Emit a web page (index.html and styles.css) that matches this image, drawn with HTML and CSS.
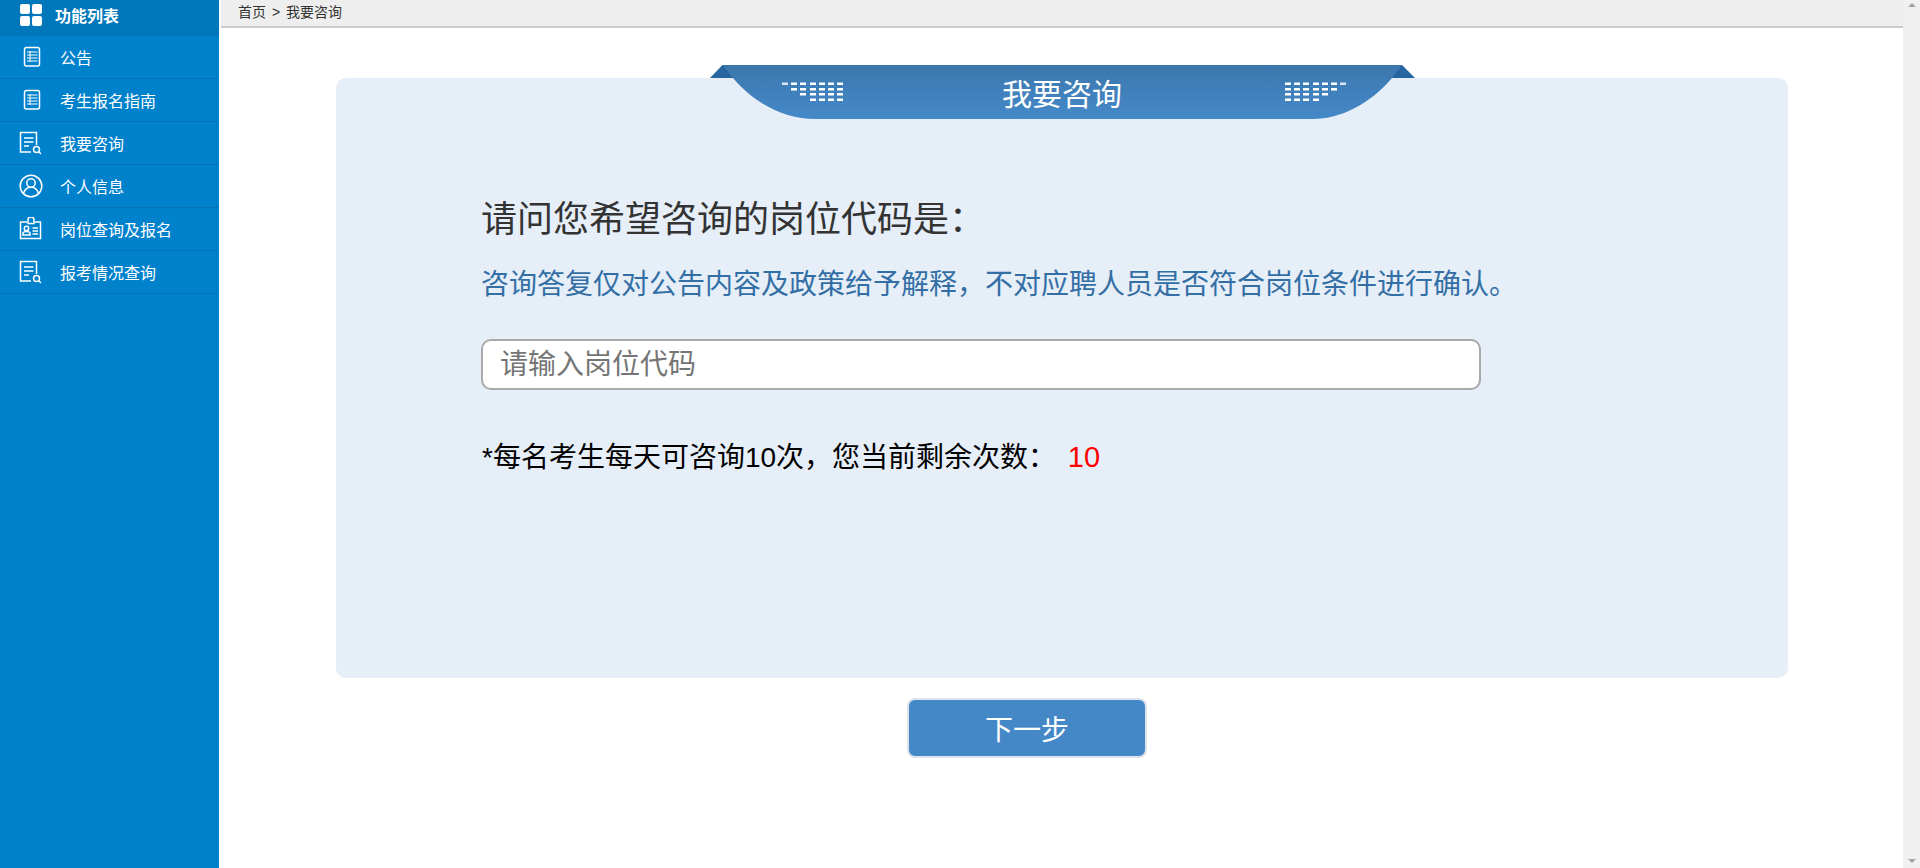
FILE: index.html
```html
<!DOCTYPE html>
<html lang="zh-CN">
<head>
    <meta charset="UTF-8">
    <title>我要咨询</title>
    <link rel="stylesheet" href="styles.css">
</head>
<body>
<div class="page">
    <aside class="sidebar">
        <div class="side-head">
            <svg class="head-icon" width="22" height="22" viewBox="0 0 22 22"><rect x="0" y="0" width="10" height="10" rx="2"/><rect x="12" y="0" width="10" height="10" rx="2"/><rect x="0" y="12" width="10" height="10" rx="2"/><rect x="12" y="12" width="10" height="10" rx="2"/></svg>
            <span>功能列表</span>
        </div>
        <ul class="side-menu">
            <li>
                <svg class="side-icon" width="24" height="24" viewBox="0 0 24 24"><rect x="5.500" y="2.500" width="15" height="18.500" rx="2"/><path d="M8 7h10.500M8 10h10.500M8 13h10.500M8 16h10.500M11 6v11" stroke-width="1"/></svg>
                <span>公告</span>
            </li>
            <li>
                <svg class="side-icon" width="24" height="24" viewBox="0 0 24 24"><rect x="5.500" y="2.500" width="15" height="18.500" rx="2"/><path d="M8 7h10.500M8 10h10.500M8 13h10.500M8 16h10.500M11 6v11" stroke-width="1"/></svg>
                <span>考生报名指南</span>
            </li>
            <li>
                <svg class="side-icon" width="24" height="24" viewBox="0 0 24 24"><path d="M12 21H1.500V1.500h16V14"/><path d="M5 7h9.500M5 11h9.500M5 15h5"/><circle cx="17.500" cy="18.500" r="3"/><path d="M20 21l2 2"/></svg>
                <span>我要咨询</span>
            </li>
            <li>
                <svg class="side-icon" width="24" height="24" viewBox="0 0 24 24"><circle cx="12" cy="12" r="10.800"/><circle cx="12" cy="9" r="4.200"/><path d="M4.500 19.500c1-4 4-6.200 7.500-6.200s6.500 2.200 7.500 6.200"/></svg>
                <span>个人信息</span>
            </li>
            <li>
                <svg class="side-icon" width="24" height="24" viewBox="0 0 24 24"><path d="M8 5H1.500v16.500h20V5H16"/><path d="M9 6.500V3a3 3 0 0 1 6 0v3.500z"/><circle cx="7.500" cy="11.500" r="2.200"/><path d="M4 18v-1.500c0-1 1.500-2 3.500-2s3.500 1 3.500 2V18z"/><path d="M13.500 11h5.500M13.500 14h5.500M13.500 17h5.500"/></svg>
                <span>岗位查询及报名</span>
            </li>
            <li>
                <svg class="side-icon" width="24" height="24" viewBox="0 0 24 24"><path d="M12 21H1.500V1.500h16V14"/><path d="M5 7h9.500M5 11h9.500M5 15h5"/><circle cx="17.500" cy="18.500" r="3"/><path d="M20 21l2 2"/></svg>
                <span>报考情况查询</span>
            </li>
        </ul>
    </aside>

    <main class="main">
        <div class="crumb">首页 &gt; 我要咨询</div>
        <div class="content">
            <section class="card">
                <div class="ribbon">
                    <svg class="ribbon-bg" width="705" height="54" viewBox="0 0 705 54">
                        <defs>
                            <linearGradient id="ribbonFill" x1="0" y1="0" x2="0" y2="1">
                                <stop offset="0" stop-color="#3b77ad"/>
                                <stop offset="1" stop-color="#4589c9"/>
                            </linearGradient>
                        </defs>
                        <path fill="#26659f" d="M0 13L12.500 0H23L23 13z"/>
                        <path fill="#26659f" d="M705 13L692 0H682V13z"/>
                        <path fill="url(#ribbonFill)" d="M12.500 0H692L682 13C660 39 630 54 603 54H105C75 54 45 39 23 13z"/>
                        <g fill="#fff">
                            <rect x="72" y="17.500" width="6" height="2.500" opacity=".8"/>
                            <rect x="81" y="17.500" width="6" height="2.500"/><rect x="90" y="17.500" width="6" height="2.500"/><rect x="100" y="17.500" width="6" height="2.500"/><rect x="109" y="17.500" width="6" height="2.500"/><rect x="118" y="17.500" width="6" height="2.500"/><rect x="127" y="17.500" width="6" height="2.500"/>
                            <rect x="81" y="23" width="6" height="2.500"/><rect x="90" y="23" width="6" height="2.500"/><rect x="100" y="23" width="6" height="2.500"/><rect x="109" y="23" width="6" height="2.500"/><rect x="118" y="23" width="6" height="2.500"/><rect x="127" y="23" width="6" height="2.500"/>
                            <rect x="90" y="28" width="6" height="2.500"/><rect x="100" y="28" width="6" height="2.500"/><rect x="109" y="28" width="6" height="2.500"/><rect x="118" y="28" width="6" height="2.500"/><rect x="127" y="28" width="6" height="2.500"/>
                            <rect x="100" y="33.500" width="6" height="2.500"/><rect x="109" y="33.500" width="6" height="2.500"/><rect x="118" y="33.500" width="6" height="2.500"/><rect x="127" y="33.500" width="6" height="2.500"/>

                            <rect x="575" y="17.500" width="6" height="2.500"/><rect x="584" y="17.500" width="6" height="2.500"/><rect x="593" y="17.500" width="6" height="2.500"/><rect x="603" y="17.500" width="6" height="2.500"/><rect x="612" y="17.500" width="6" height="2.500"/><rect x="621" y="17.500" width="6" height="2.500"/><rect x="630" y="17.500" width="6" height="2.500" opacity=".8"/>
                            <rect x="575" y="23" width="6" height="2.500"/><rect x="584" y="23" width="6" height="2.500"/><rect x="593" y="23" width="6" height="2.500"/><rect x="603" y="23" width="6" height="2.500"/><rect x="612" y="23" width="6" height="2.500"/><rect x="621" y="23" width="6" height="2.500"/>
                            <rect x="575" y="28" width="6" height="2.500"/><rect x="584" y="28" width="6" height="2.500"/><rect x="593" y="28" width="6" height="2.500"/><rect x="603" y="28" width="6" height="2.500"/><rect x="612" y="28" width="6" height="2.500"/>
                            <rect x="575" y="33.500" width="6" height="2.500"/><rect x="584" y="33.500" width="6" height="2.500"/><rect x="593" y="33.500" width="6" height="2.500"/><rect x="603" y="33.500" width="6" height="2.500"/>
                        </g>
                    </svg>
                    <h1 class="ribbon-title">我要咨询</h1>
                </div>
                <h2 class="question">请问您希望咨询的岗位代码是：</h2>
                <p class="note">咨询答复仅对公告内容及政策给予解释，不对应聘人员是否符合岗位条件进行确认。</p>
                <input class="code-input" type="text" placeholder="请输入岗位代码">
                <p class="remain">*每名考生每天可咨询10次，您当前剩余次数： <span class="remain-num">10</span></p>
            </section>
            <button class="next-btn">下一步</button>
        </div>
    </main>

    <div class="scrollbar">
        <span class="arrow-up"></span>
        <span class="arrow-down"></span>
    </div>
</div>
</body>
</html>
```

FILE: styles.css
```css
* {box-sizing: border-box;}
html, body {margin: 0; height: 100%; overflow: hidden;}
body {font-family: "Liberation Sans", "Noto Sans CJK SC", sans-serif; background: #fff;}
.page {display: flex; height: 868px;}

/* sidebar */
.sidebar {width: 219px; flex: none; background: #0081cc; color: #fff;}
.side-head {height: 36px; background: #0077bb; display: flex; align-items: center; padding-left: 20px; font-size: 16px; font-weight: bold; gap: 13px;}
.head-icon {fill: #fff; flex: none; margin-top: -6px;}
.head-icon + span {margin-top: -6px;}
.side-menu {list-style: none; margin: 0; padding: 0;}
.side-menu li {height: 43px; border-bottom: 1px solid #0073b6; display: flex; align-items: center; padding-left: 19px; font-size: 16px; gap: 17px;}
.side-icon {fill: none; stroke: #fff; stroke-width: 1.5; flex: none;}

/* top crumb */
.main {flex: 1; min-width: 0; margin-left: 2px;}
.crumb {height: 28px; background: #eee; border-bottom: 2px solid #ccc; padding-left: 17px; font-size: 14px; line-height: 25px; color: #333; word-spacing: 2px;}
.content {display: flex; flex-direction: column; align-items: center; padding-top: 50px;}

/* card */
.card {position: relative; width: 1452px; height: 600px; background: #e6eef8; border-radius: 10px; padding: 117px 0 0 145px;}
.ribbon {position: absolute; left: 374px; top: -13px; width: 705px; height: 54px;}
.ribbon-bg {display: block;}
.ribbon-title {position: absolute; left: -1px; right: 0; top: 8px; margin: 0; text-align: center; font-size: 30px; font-weight: normal; line-height: 44px; color: #fff;}
.question {margin: 0; font-size: 36px; font-weight: normal; line-height: 50px; color: #333;}
.note {margin: 18px 0 0; font-size: 28px; line-height: 44px; color: #336fa5;}
.code-input {display: block; width: 1000px; height: 51px; margin-top: 32px; padding: 0 16px 0 17px; border: 2px solid #a9a9a9; border-radius: 10px; background: #fff; font: inherit; font-size: 28px; outline: none;}
.code-input::placeholder {color: #757575;}
.remain {margin: 44px 0 0 1px; font-size: 28px; line-height: 46px; color: #000;}
.remain-num {color: #f00; margin-left: 4px; font-size: 29px;}

/* next */
.next-btn {width: 240px; height: 60px; margin: 20px 70px 0 0; background: #4488c8; color: #fff; border: 2px solid #dde3ec; border-radius: 8px; font: inherit; font-size: 28px; cursor: pointer;}

/* fake scroll track */
.scrollbar {width: 17px; flex: none; background: #f0f0f0; display: flex; flex-direction: column; justify-content: space-between; align-items: center; padding: 3px 0 5px;}
.arrow-up {width: 0; height: 0; border-left: 4px solid transparent; border-right: 4px solid transparent; border-bottom: 4px solid #a3a3a3;}
.arrow-down {width: 0; height: 0; border-left: 4px solid transparent; border-right: 4px solid transparent; border-top: 4px solid #a3a3a3;}
```
